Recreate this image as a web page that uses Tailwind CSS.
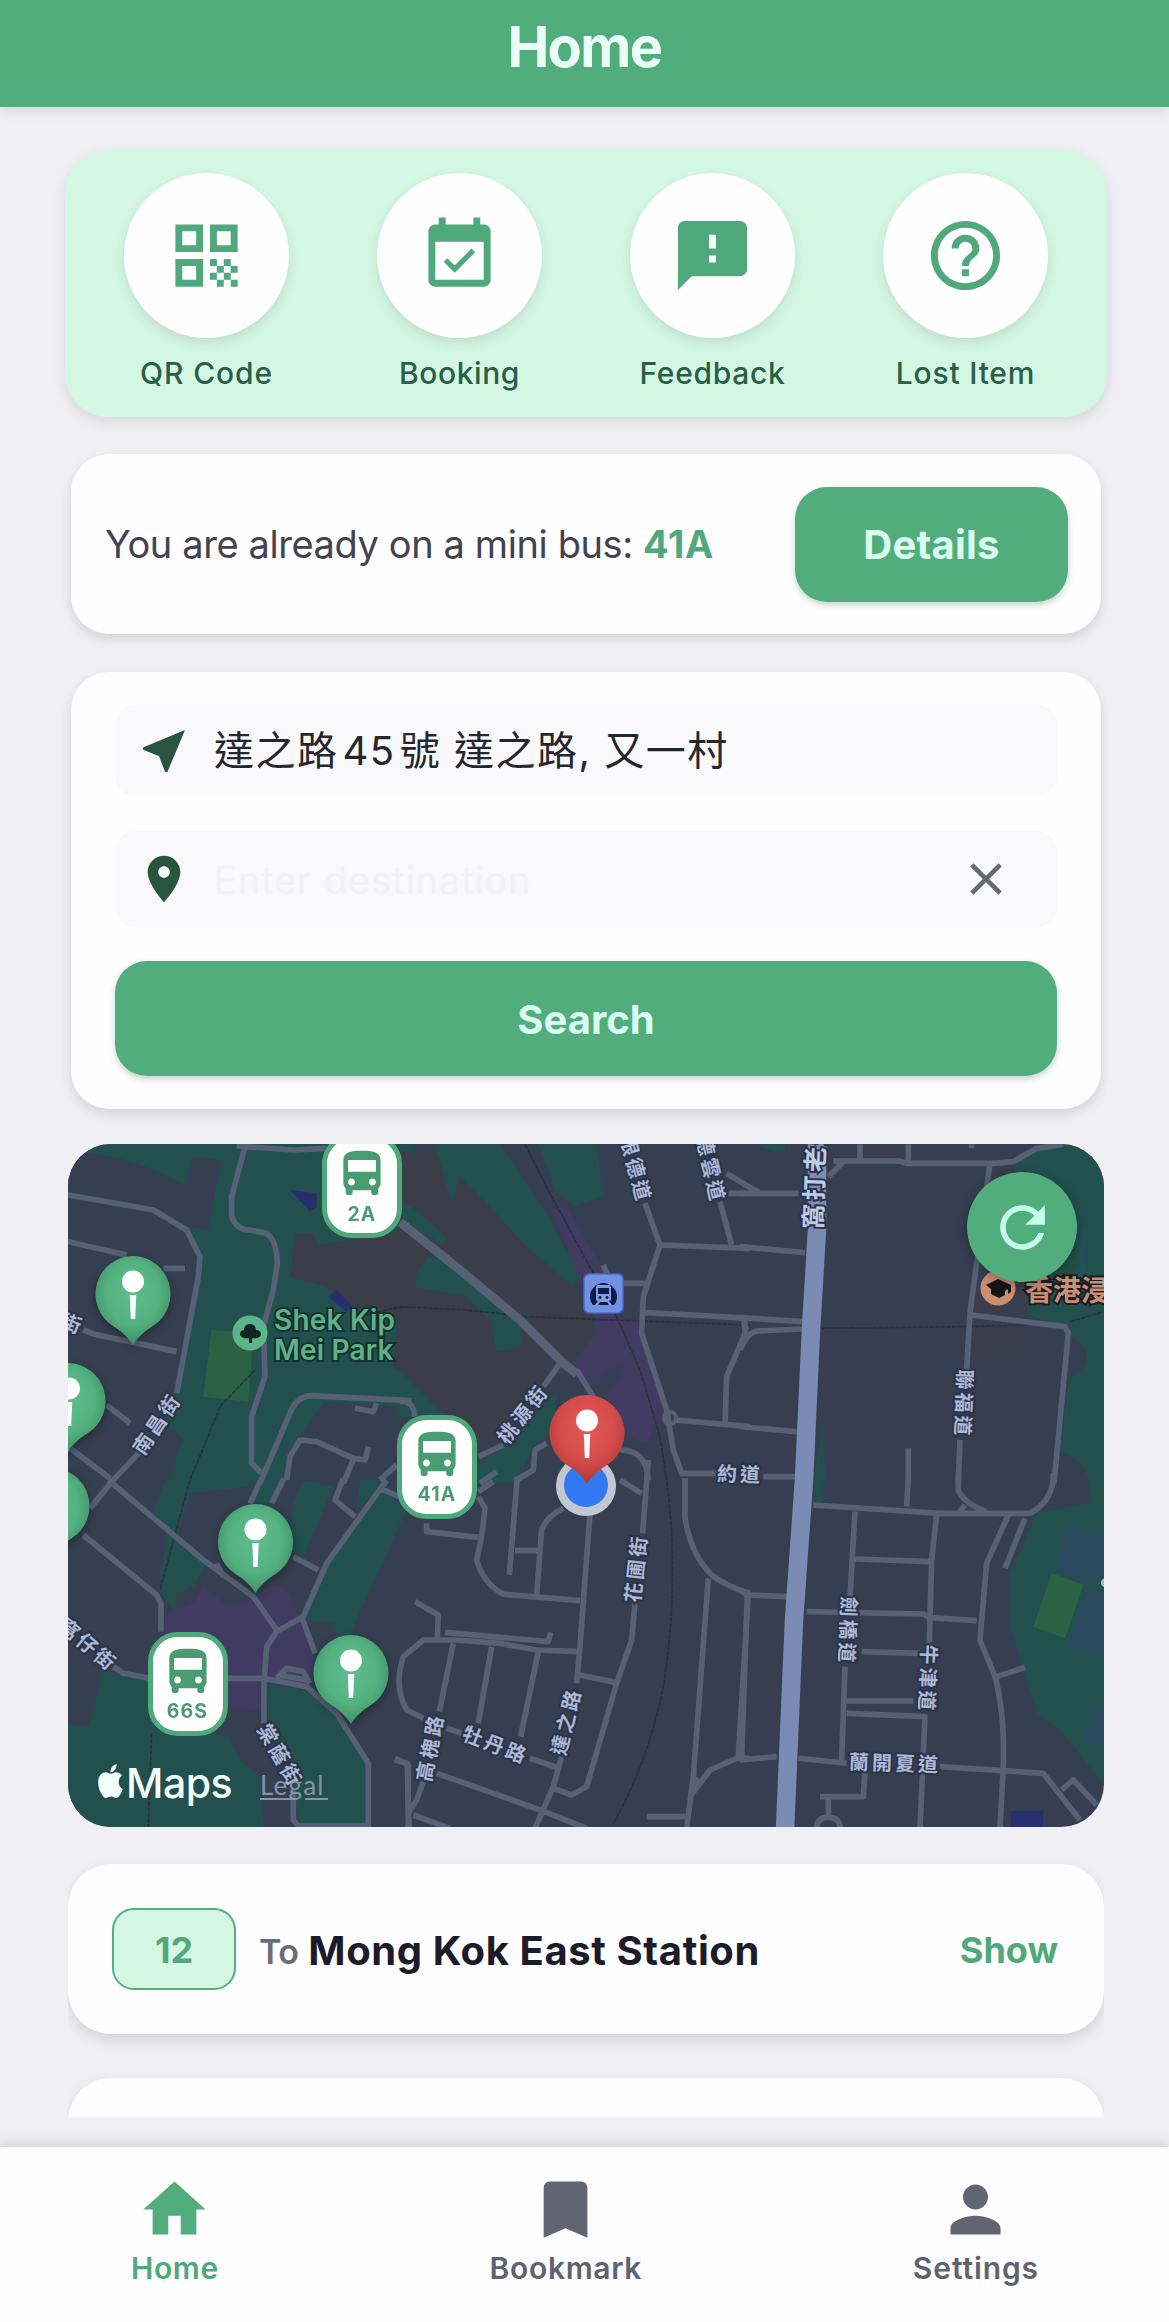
<!DOCTYPE html>
<html lang="en">
<head>
<meta charset="utf-8">
<title>Home</title>
<script src="https://cdn.jsdelivr.net/npm/@tailwindcss/browser@4"></script>
</head>
<body class="bg-[#f0eff4] font-['Inter','Noto_Sans_CJK_TC',sans-serif]">
<div class="flex h-[2322px] w-[1169px] flex-col overflow-hidden">

  <header class="relative z-10 flex h-[107px] shrink-0 justify-center bg-[#52ad7c] pt-[13px] shadow-[0_3px_14px_rgba(0,0,0,0.12)]">
    <h1 class="text-[56px] leading-[68px] font-bold tracking-[-1.6px] text-[#eafff7]">Home</h1>
  </header>

  <main class="flex flex-col pt-[43px] pr-[62px] pl-[65px]">
    <!-- Quick actions -->
    <section class="grid h-[267px] grid-cols-4 rounded-[43px] bg-[#d4f7e3] px-[15px] pt-[23px] shadow-[0_5px_14px_rgba(0,0,0,0.1)]">
      <div class="flex flex-col items-center">
        <div class="flex size-[165px] items-center justify-center rounded-full bg-[#fefdff] shadow-[0_5px_12px_rgba(0,0,0,0.1)]">
          <svg class="size-[83px] fill-[#4fa97b]" viewBox="0 0 24 24"><path d="M3 11h8V3H3v8zm2-6h4v4H5V5zM3 21h8v-8H3v8zm2-6h4v4H5v-4zM13 3v8h8V3h-8zm6 6h-4V5h4v4zM19 19h2v2h-2zM13 13h2v2h-2zM15 15h2v2h-2zM13 17h2v2h-2zM15 19h2v2h-2zM17 17h2v2h-2zM17 13h2v2h-2zM19 15h2v2h-2z"/></svg>
        </div>
        <span class="mt-[15px] text-[30px] leading-10 font-medium tracking-[0.9px] text-[#2a5e48]">QR Code</span>
      </div>
      <div class="flex flex-col items-center">
        <div class="flex size-[165px] items-center justify-center rounded-full bg-[#fefdff] shadow-[0_5px_12px_rgba(0,0,0,0.1)]">
          <svg class="size-[83px] fill-[#4fa97b]" viewBox="0 0 24 24"><path d="M16.53 11.06L15.47 10l-4.88 4.88-2.12-2.12-1.06 1.06L10.59 17l5.94-5.94zM19 3h-1V1h-2v2H8V1H6v2H5c-1.11 0-1.99.9-1.99 2L3 19c0 1.1.89 2 2 2h14c1.1 0 2-.9 2-2V5c0-1.1-.9-2-2-2zm0 16H5V8h14v11z"/></svg>
        </div>
        <span class="mt-[15px] text-[30px] leading-10 font-medium tracking-[0.6px] text-[#2a5e48]">Booking</span>
      </div>
      <div class="flex flex-col items-center">
        <div class="flex size-[165px] items-center justify-center rounded-full bg-[#fefdff] shadow-[0_5px_12px_rgba(0,0,0,0.1)]">
          <svg class="size-[83px] fill-[#4fa97b]" viewBox="0 0 24 24"><path d="M20 2H4c-1.1 0-1.99.9-1.99 2L2 22l4-4h14c1.1 0 2-.9 2-2V4c0-1.1-.9-2-2-2zm-7 12h-2v-2h2v2zm0-4h-2V6h2v4z"/></svg>
        </div>
        <span class="mt-[15px] text-[30px] leading-10 font-medium tracking-[0.7px] text-[#2a5e48]">Feedback</span>
      </div>
      <div class="flex flex-col items-center">
        <div class="flex size-[165px] items-center justify-center rounded-full bg-[#fefdff] shadow-[0_5px_12px_rgba(0,0,0,0.1)]">
          <svg class="size-[83px] fill-[#4fa97b]" viewBox="0 0 24 24"><path d="M11 18h2v-2h-2v2zm1-16C6.48 2 2 6.48 2 12s4.48 10 10 10 10-4.48 10-10S17.52 2 12 2zm0 18c-4.41 0-8-3.59-8-8s3.59-8 8-8 8 3.59 8 8-3.59 8-8 8zm0-14c-2.21 0-4 1.79-4 4h2c0-1.1.9-2 2-2s2 .9 2 2c0 2-3 1.75-3 5h2c0-2.25 3-2.5 3-5 0-2.21-1.79-4-4-4z"/></svg>
        </div>
        <span class="mt-[15px] text-[30px] leading-10 font-medium tracking-[0.8px] text-[#2a5e48]">Lost Item</span>
      </div>
    </section>

    <!-- Current ride -->
    <section class="mx-[6px] mt-[37px] flex h-[180px] items-center justify-between rounded-[38px] bg-[#fefdff] pr-[33px] pl-[34px] shadow-[0_5px_12px_rgba(0,0,0,0.12)]">
      <p class="text-[38px] leading-[48px] tracking-[-0.4px] whitespace-nowrap text-[#42434f]">You are already on a mini bus: <span class="font-bold tracking-[0.6px] text-[#4fa97b]">41A</span></p>
      <button class="h-[115px] w-[273px] rounded-[32px] bg-[#52ad7c] pt-[2px] text-[40px] font-bold tracking-[0.2px] text-[#d9fff1] shadow-[0_3px_6px_rgba(30,90,60,0.25)]">Details</button>
    </section>

    <!-- Trip search -->
    <section class="mx-[6px] mt-[38px] flex h-[437px] flex-col rounded-[38px] bg-[#fefdff] px-[44px] pt-[33px] shadow-[0_5px_12px_rgba(0,0,0,0.12)]">
      <div class="flex h-[91px] items-center rounded-[20px] bg-[#f9f8fb] pl-[21px]">
        <svg class="size-[56px] fill-[#29543f]" viewBox="0 0 24 24"><path d="M21 3L3 10.53v.98l6.84 2.65L12.48 21h.98L21 3z"/></svg>
        <span class="ml-[22px] text-[40px] leading-[56px] tracking-[1.5px] whitespace-nowrap text-[#25262e]">達之路<span class="mx-[4px]">45</span>號 達之路, 又一村</span>
      </div>
      <div class="mt-[35px] flex h-[96px] items-center rounded-[20px] bg-[#f9f8fb] pr-[44px] pl-[21px]">
        <svg class="size-[56px] fill-[#29543f]" viewBox="0 0 24 24"><path d="M12 2C8.13 2 5 5.13 5 9c0 5.25 7 13 7 13s7-7.75 7-13c0-3.87-3.13-7-7-7zm0 9.500c-1.38 0-2.500-1.120-2.500-2.500s1.120-2.500 2.500-2.500 2.500 1.120 2.500 2.500-1.120 2.500-2.500 2.500z"/></svg>
        <span class="ml-[22px] grow pt-[2px] text-[38px] leading-[56px] tracking-[0.9px] text-[#f3f2f6]">Enter destination</span>
        <svg class="size-[54px] fill-[#666874]" viewBox="0 0 24 24"><path d="M19 6.41L17.59 5 12 10.590 6.410 5 5 6.410 10.590 12 5 17.590 6.410 19 12 13.410 17.590 19 19 17.590 13.410 12z"/></svg>
      </div>
      <button class="mt-[34px] h-[115px] w-full rounded-[32px] bg-[#52ad7c] pt-[2px] text-[40px] font-bold text-[#d9fff1] shadow-[0_3px_6px_rgba(30,90,60,0.25)]">Search</button>
    </section>

    <!-- Map -->
    <section class="relative mx-[3px] mt-[35px] h-[683px] w-[1036px] overflow-hidden rounded-[43px] bg-[#363f51]">
      <svg class="block h-[683px] w-[1036px]" viewBox="68 1144 1036 683">
        <defs>
          <radialGradient id="pg" cx=".5" cy=".42" r=".58"><stop offset="0" stop-color="#5fbd8e"/><stop offset=".6" stop-color="#54b281"/><stop offset="1" stop-color="#3f9066"/></radialGradient>
          <radialGradient id="pr" cx=".5" cy=".38" r=".6"><stop offset="0" stop-color="#e25b58"/><stop offset=".6" stop-color="#d54c4a"/><stop offset="1" stop-color="#b23a3b"/></radialGradient>
          <g id="glyph" fill="#fff"><circle cy="-12.500" r="11"/><path d="M-3.200 1h6.400l-1 24h-4.400z"/></g>
          <path id="drop" d="M0-38a38 38 0 0 1 20 70C12 37 4 44 0 51-4 44-12 37-20 32A38 38 0 0 1 0-38z"/>
          <g id="bus"><rect x="2.500" y="2.500" width="75" height="99" rx="27" fill="#fff" stroke="#4fa97b" stroke-width="5"/><path transform="translate(12 12) scale(2.330)" fill="#489c70" d="M4 16c0 .88.39 1.670 1 2.220V20c0 .55.45 1 1 1h1c.55 0 1-.45 1-1v-1h8v1c0 .55.45 1 1 1h1c.55 0 1-.45 1-1v-1.780c.61-.55 1-1.340 1-2.220V6c0-3.500-3.580-4-8-4s-8 .5-8 4v10zm3.500 1c-.83 0-1.500-.67-1.500-1.500S6.670 14 7.500 14s1.500.67 1.500 1.500S8.330 17 7.500 17zm9 0c-.83 0-1.500-.67-1.500-1.500s.67-1.500 1.500-1.500 1.500.67 1.500 1.500-.67 1.500-1.500 1.500zm1.500-6H6V6h12v5z"/></g>
        </defs>

        <!-- Land cover -->
        <g transform="translate(60 1130) scale(.3333)">
          <path fill="#22504f" d="M24 43H1060V1060H330L350 980 370 930 310 870 345 790 375 670 415 440 410 370 380 300 280 240 24 195z"/>
          <path fill="#363f51" d="M24 60L180 85 270 115 380 165 395 80 485 90 445 300 380 290 280 230 24 185z"/>
          <path fill="#363f51" d="M24 260L330 325 345 350 320 385 380 430 410 440 375 670 24 620zM795 815L1060 830V1060H670L690 960 730 900z"/>
          <path fill="#3b3d48" d="M705 310L760 310 775 345 1060 300V780L1000 710 1015 560 900 540 800 470 690 440z"/>
          <path fill="#2c6244" d="M455 600L580 610 565 815 430 800z"/>
          <path fill="#26306f" d="M690 180L770 190V230L750 245zM830 480L880 530 860 545 805 500z"/>
        </g>
        <g transform="translate(400 1130) scale(.3333)">
          <path fill="#3b3d48" d="M-10 60L110 80 150 215 180 145 260 225 520 465 580 550 570 640 530 690 470 700 430 770 240 960 110 840-10 740z"/>
          <path fill="#22504f" d="M105 43H300L440 250 540 440 520 470 380 350 260 220 180 140 155 220zM415 43H585L615 195 525 230 470 190z"/>
          <path fill="#22504f" d="M-10 200L60 250 140 320 130 345-10 260zM50 430L80 385 120 380 370 580 360 650 290 665 270 570 200 500 45 470zM-10 715L110 835 180 880 90 860-10 860zM180 1060L240 1000 330 940 430 830 470 790 460 900 400 950 350 1060z"/>
          <path fill="#413b61" d="M455 240L500 230 600 400 660 560 715 580 740 680 790 840 740 940 660 910 620 780 560 760 525 690 580 620 580 540 540 450z"/>
          <path fill="#363f57" d="M585 770L610 730 670 695 665 740 620 780z"/>
        </g>
        <g transform="translate(740 1130) scale(.3333)">
          <path fill="#3a3d4c" d="M310 43H500V85H310zM700 480H860V560L700 545zM700 580L850 600 860 670 700 690z"/>
          <path fill="#22504f" d="M820 95L890 60 960 43H1100V1060H1050Q1040 1000 960 960L990 740Q1045 720 1040 670 1030 630 990 620L985 590 860 555 865 470 830 400 850 200zM50 43H135V65H100zM250 860L255 1060H222z"/>
          <path fill="#225044" d="M960 350L1010 330 1020 440 950 440z"/><path fill="#24505f" d="M1020 290H1035V440H1018z"/>
        </g>
        <g transform="translate(60 1480) scale(.3333)">
          <path fill="#22504f" d="M315 0H600L560 20 390 40 350 180 440 250 400 320 350 340 345 400 305 340 300 300 320 160 280 90zM605 0H665L640 70 575 70zM730 0L820 20 730 230 690 210 700 70zM960 30L1040 90 880 440 870 480 830 480 820 430 740 420 790 260z"/>
          <path fill="#22504f" d="M890 90L900 0H985L950 30zM130 575L280 590V750L500 765 540 840 600 890 610 1045H24V730L85 740zM620 610L780 640 870 760 930 850V1045H720L700 900 625 740z"/>
          <path fill="#413b61" d="M320 400L400 370 430 320 500 375 560 370 640 310 690 340 770 560 740 580 620 590 600 690 500 680 310 460z"/>
        </g>
        <g transform="translate(740 1480) scale(.3333)">
          <path fill="#22504f" d="M1100 0H1055L1045 70 890 100 810 280V440L850 560 890 700 970 760 1100 925zM222 0H250V65L220 70z"/>
          <path fill="#294a5c" d="M975 135L1100 170V300L1030 310 945 270zM1035 320L1100 340V530L985 500zM1065 680L1100 670V810L1030 780z"/>
          <path fill="#2c6244" d="M935 280L1030 315 975 475 880 440z"/>
          <path fill="#26306f" d="M812 992H910V1045H812z"/><circle cx="1096" cy="308" r="13" fill="#86d39f"/>
        </g>

        <!-- Rail and boundaries -->
        <g fill="none" stroke="#29303f" stroke-width="5" stroke-dasharray="14 3">
          <path transform="translate(60 1130) scale(.3333)" d="M585 720L480 830 440 930 390 1050 300 1380M275 1810L265 2090M900 560L1000 535 1050 530"/>
          <path transform="translate(400 1130) scale(.3333)" d="M375 43L450 190 580 430 650 560 720 720 780 920 800 1050Q840 1350 790 1670 740 1910 640 2080M0 530L200 540 380 560 640 570 1050 585M1265 595L1700 590 1880 585M2010 575L2112 545"/>
        </g>

        <!-- Streets -->
        <g fill="none" stroke="#566176" stroke-width="17" stroke-linejoin="round">
          <path transform="translate(60 1130) scale(.3333)" d="M24 195L280 240 380 300 420 380 415 440 350 790M24 335L200 375M310 415H375M70 600L100 612 350 665M140 825L210 880M555 50L515 200V260Q530 300 570 300L620 310Q650 330 652 400L640 480 610 590 615 740 575 860V1000L605 1030M600 1060L690 850Q710 800 750 797L1055 812M680 1050L690 980 720 930 770 935 880 985 915 990 925 950M885 835L940 845 950 820M880 990L850 1060M960 1050L1010 1005M530 48L700 60 800 55M24 950L150 1045M155 1055L240 965"/>
          <path transform="translate(400 1130) scale(.3333)" d="M530 720L580 800M480 700L430 770M235 980L310 945M735 220L780 345 730 500 725 610 800 840 820 960 845 1030H960M960 215L995 345M780 345L1050 355M980 130L1070 185M985 190H1050M610 405L625 440M670 460H740M735 548L880 555 1050 565M1035 570V610L980 740 975 885M825 870L1050 890M660 960Q740 960 745 1050M350 1050L400 1020 405 960 440 940M0 815Q40 810 45 860M240 1060L290 1025"/>
          <circle cx="670" cy="1418" r="6" stroke-width="4"/>
          <path transform="translate(740 1130) scale(.3333)" d="M0 350L195 368M0 563L190 575M0 890L170 905M190 597L50 603Q20 610 0 660M0 190H175M0 155L60 190M20 600L10 575M265 140L310 95M280 93H480L500 100H760L820 95 890 55 970 43M360 43V90M505 43V100M695 43V55M750 100L710 400 690 550 680 720M660 930L655 1060M505 955V1060M695 555L975 590 985 610 942 1060M70 1040H165"/>
          <path transform="translate(60 1480) scale(.3333)" d="M145 0L430 240 580 350 650 450M160 0L90 85M70 165L290 345 303 370V455M160 560L190 580 270 595M500 595H610L740 620 830 700 925 850V1045M980 0L800 250 730 410 650 455 620 500 612 610V730M725 410L765 520M700 230L775 270M605-5L570 70M672-5L635 70M850-5L825 60 885 110M960 25L1040 60M650 595L680 565 730 575 750 610M655 585L740 600M700 930V1020L715 1038H930M470 250L490 290M1005 835L1045 855V1045"/>
          <path transform="translate(400 1480) scale(.3333)" d="M235 50L255 85 245 170 230 240Q250 310 310 343L540 362M235 35L280 5M80 130L80 155 235 172M352-10L328 285M345 212H415M490 85Q440 110 425 150L410 345M570 100L540 500 530 610M485 830L460 920 405 1045M745-60L728 160M660 0L725 40M705 370L695 480 650 610 560 920 515 945 460 925M540 585L650 608M45 365L115 405 112 475M135 457L445 485 452 458M535 515L410 510 300 490 165 480H70L10 530Q-20 620 20 690L70 715M160 490L118 695M275 500L235 730M415 515L362 770M140 745L185 760M390 835L470 862M110 880L420 990 560 1045M70 905L50 960 25 1000 28 1045M25 1000L22 850-15 840M40 1005L150 1045M855-5V110Q870 220 935 285 980 320 1050 340M925 295L880 890 860 1045M1045 340L1015 830M740 1010H855M1050 835H1010L930 870 870 950M885 895L900 915"/>
          <path transform="translate(740 1480) scale(.3333)" d="M220 75L600 100H870Q930 70 940 0V-20M655-20V30Q670 70 740 95M655 100L675 75M505-5L500 80M345 95L330 350M345 237L575 245M590 105L575 240 568 490M200 395L550 402 570 413 710 422M805 105L740 250 720 480 765 590Q795 700 790 860L780 1045M855 115L795 265M770 590L855 562M315 560L305 840M365 515L540 520M320 663H520M320 700L555 710 540 1045M0 840L110 830M175 835L320 850M600 860L910 880 1020 1020M965 930L1000 900 1070 975M375 880L370 950H240M265 950V1010M230 1045Q230 1012 265 1012 300 1012 300 1045M0 330L20 345 145 350M22 345L5 830"/>
          <path stroke-width="9" d="M400 1222L460 1270 520 1320 562 1362 577 1374"/>
        </g>
        <path fill="none" stroke="#7c8bb3" stroke-width="18.500" d="M817 1144V1230L811 1330 804 1480 794 1620 785 1830"/>

        <!-- Street names -->
        <g class="font-['Noto_Sans_CJK_TC',sans-serif]" font-size="20" font-weight="700" letter-spacing="3" fill="#abb8d8" stroke="#2c3547" stroke-width="4" paint-order="stroke" text-anchor="middle" dominant-baseline="central">
          <text transform="translate(637 1169) rotate(75)">根德道</text>
          <text transform="translate(712 1169) rotate(77)">德雲道</text>
          <text transform="translate(813 1172) rotate(-88)" font-size="25" letter-spacing="3.500" fill="#bccbe6">窩打老道</text>
          <text transform="translate(965 1404) rotate(92)">聯福道</text>
          <text transform="translate(156 1423) rotate(-56)">南昌街</text>
          <text transform="translate(73 1323) rotate(20)">街</text>
          <text transform="translate(522 1413) rotate(-52)">桃源街</text>
          <text transform="translate(740 1473) rotate(2)">約道</text>
          <text transform="translate(635 1568) rotate(-84)">花圃街</text>
          <text transform="translate(565 1721) rotate(-76)">達之路</text>
          <text transform="translate(496 1744) rotate(21)">牡丹路</text>
          <text transform="translate(429 1747) rotate(-79)">高槐路</text>
          <text transform="translate(849 1631) rotate(92)">劍橋道</text>
          <text transform="translate(929 1679) rotate(92)">牛津道</text>
          <text transform="translate(895 1762) rotate(2)">蘭開夏道</text>
          <text transform="translate(281 1755) rotate(60)">棠蔭街</text>
          <text transform="translate(89 1644) rotate(40)">窩仔街</text>
        </g>

        <!-- Places -->
        <circle cx="250" cy="1333" r="17.500" fill="#5cb58a"/>
        <path fill="#12241f" d="M249 1343v-5c-5 1-9-1-9-4s2-4 4-4c0-4 3-6 6-6s6 2 6 6c3 0 5 2 5 4 0 3-4 5-9 4v5z"/>
        <g font-size="28" font-weight="600" fill="#5fb287" stroke="#17312f" stroke-width="4" paint-order="stroke" letter-spacing=".2"><text x="274" y="1330">Shek Kip</text><text x="274" y="1360">Mei Park</text></g>
        <circle cx="998" cy="1288" r="17.500" fill="#ca8f6f"/>
        <path fill="#15161c" d="M986 1285l12-6 13 6v7l-3 2v-5l-3 2v4l-6 3-8-4v-5z"/>
        <text x="1025" y="1301" class="font-['Noto_Sans_CJK_TC',sans-serif]" font-size="28" font-weight="700" fill="#c98f73" stroke="#1b1c24" stroke-width="4" paint-order="stroke">香港浸會大學</text>
        <rect x="583" y="1273" width="41" height="41" rx="6" fill="#3f5cc0"/><rect x="584.500" y="1274.500" width="38" height="38" rx="5" fill="#6f92e2"/>
        <path fill="#0f1a45" d="M593 1305a13.500 13.500 0 1 1 21 0z"/>
        <path fill="#7d9de6" fill-rule="evenodd" d="M598 1285h11q2 0 2 2v12q0 2-2 2l3 4h-3l-2-3h-7l-2 3h-3l3-4q-2 0-2-2v-12q0-2 2-2zm0 3v6h11v-6zm2 8a1.500 1.500 0 1 0 .1 0zm7 0a1.500 1.500 0 1 0 .1 0z"/>

        <!-- Stops and minibuses -->
        <g filter="drop-shadow(0 3px 4px rgba(0,0,0,.35))">
          <use href="#drop" x="133" y="1294" fill="url(#pg)"/><use href="#drop" x="68" y="1401" fill="url(#pg)"/><use href="#drop" x="52" y="1506" fill="url(#pg)"/><use href="#drop" x="255.500" y="1542" fill="url(#pg)"/><use href="#drop" x="351" y="1673" fill="url(#pg)"/>
        </g>
        <use href="#glyph" x="133" y="1294"/><use href="#glyph" x="69" y="1401"/><use href="#glyph" x="255.500" y="1542"/><use href="#glyph" x="351" y="1673"/>
        <circle cx="586" cy="1486" r="30" fill="#c3c7d0"/><circle cx="586" cy="1485" r="22" fill="#3179f2"/>
        <use href="#drop" x="587" y="1433" fill="url(#pr)"/><use href="#glyph" x="587" y="1433"/>
        <use href="#bus" x="322" y="1134"/><use href="#bus" x="397" y="1415"/><use href="#bus" x="148" y="1632"/>
        <g font-size="19.500" font-weight="700" fill="#4b9c72" letter-spacing="1.200" text-anchor="middle"><text x="362" y="1221">2A</text><text x="437" y="1501">41A</text><text x="187.500" y="1718">66S</text></g>

        <!-- Attribution -->
        <path fill="#f2fffd" transform="translate(91 1758.500) scale(1.620 1.880)" d="M17.050 20.280c-.98.95-2.050.8-3.080.35-1.090-.46-2.090-.48-3.240 0-1.440.62-2.200.44-3.060-.35C2.790 15.250 3.510 7.590 9.050 7.310c1.350.07 2.290.74 3.080.8 1.180-.24 2.310-.93 3.570-.84 1.510.12 2.650.72 3.400 1.800-3.120 1.870-2.380 5.980.48 7.130-.57 1.500-1.310 2.990-2.540 4.090zM12.030 7.250c-.15-2.230 1.660-4.070 3.740-4.250.29 2.580-2.340 4.500-3.740 4.250z"/>
        <text x="126" y="1797.500" font-size="41" font-weight="500" fill="#f2fffd" letter-spacing="-.5">Maps</text>
        <text x="260" y="1795" class="font-['Lato',sans-serif]" font-size="26" fill="#8794a3" letter-spacing="1.200">Legal</text>
        <path stroke="#8794a3" stroke-width="2" d="M260 1799H297M305 1799H328"/>
      </svg>
      <button class="absolute top-[28px] right-[27px] flex size-[110px] items-center justify-center rounded-full bg-[#52ad7c] shadow-[0_3px_12px_rgba(0,0,0,0.3)]">
        <svg class="size-[67px] fill-[#c4ffe9]" viewBox="0 0 24 24"><path d="M17.650 6.350C16.200 4.900 14.210 4 12 4c-4.420 0-7.990 3.580-7.990 8s3.570 8 7.990 8c3.730 0 6.840-2.550 7.730-6h-2.080c-.82 2.330-3.040 4-5.650 4-3.310 0-6-2.690-6-6s2.690-6 6-6c1.660 0 3.140.69 4.220 1.780L13 11h7V4l-2.350 2.350z"/></svg>
      </button>
    </section>

    <!-- Routes -->
    <section class="mx-[3px] mt-[17px] flex h-[273px] w-[1036px] flex-col gap-[44px] overflow-hidden pt-[20px]">
      <div class="flex h-[170px] shrink-0 items-center rounded-[43px] bg-[#fefdff] pr-[46px] pl-[44px] shadow-[0_6px_14px_rgba(0,0,0,0.12)]">
        <span class="flex h-[82px] w-[124px] items-center justify-center rounded-[22px] border-[2.5px] border-[#55ad82] bg-[#d4f7e3] pt-[2px] text-[36px] font-bold text-[#52a97d]">12</span>
        <span class="ml-[23px] pt-[5px] text-[34px] leading-[52px] font-semibold tracking-[-0.6px] text-[#6b6c78]">To</span>
        <span class="ml-[10px] grow pt-[3px] text-[40px] leading-[52px] font-bold tracking-[0.6px] whitespace-nowrap text-[#1b1b29]">Mong Kok East Station</span>
        <span class="pt-[1px] text-[36px] leading-[50px] font-bold text-[#4fa97b]">Show</span>
      </div>
      <div class="h-[170px] shrink-0 rounded-[43px] bg-[#fefdff] shadow-[0_6px_14px_rgba(0,0,0,0.12)]"></div>
    </section>
  </main>

  <nav class="relative mt-[30px] flex h-[175px] shrink-0 justify-between bg-[#fefdff] pt-[25px] pr-[130px] pl-[131px] shadow-[0_-4px_12px_rgba(0,0,0,0.12)]">
    <a class="flex flex-col items-center text-[#4fa97b]">
      <svg class="size-[75px] fill-[#52ad7c]" viewBox="0 0 24 24"><path d="M10 20v-6h4v6h5v-8h3L12 3 2 12h3v8z"/></svg>
      <span class="mt-[1px] text-[30px] leading-10 font-semibold tracking-[0.6px]">Home</span>
    </a>
    <a class="flex flex-col items-center text-[#5f6370]">
      <svg class="size-[75px] fill-[#616572]" viewBox="0 0 24 24"><path d="M17 3H7c-1.100 0-1.990.9-1.990 2L5 21l7-3 7 3V5c0-1.100-.9-2-2-2z"/></svg>
      <span class="mt-[1px] text-[30px] leading-10 font-semibold tracking-[0.7px]">Bookmark</span>
    </a>
    <a class="flex flex-col items-center text-[#5f6370]">
      <svg class="size-[75px] fill-[#616572]" viewBox="0 0 24 24"><path d="M12 12c2.210 0 4-1.790 4-4s-1.790-4-4-4-4 1.790-4 4 1.790 4 4 4zm0 2c-2.670 0-8 1.340-8 4v2h16v-2c0-2.660-5.330-4-8-4z"/></svg>
      <span class="mt-[1px] text-[30px] leading-10 font-semibold tracking-[0.9px]">Settings</span>
    </a>
  </nav>
</div>
</body>
</html>
